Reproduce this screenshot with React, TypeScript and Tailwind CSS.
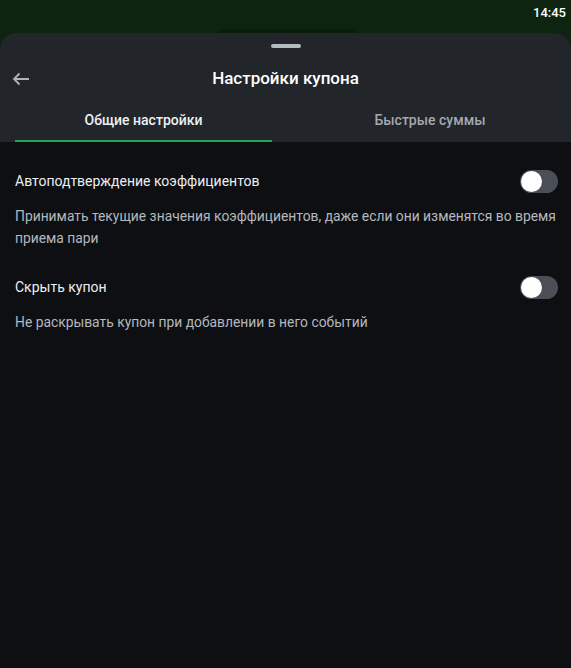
const Toggle = () => (
  <div className="w-[38px] h-[23px] rounded-full bg-[#4a4f57] flex items-center px-[1px] shrink-0">
    <div className="w-[21px] h-[21px] rounded-full bg-white" />
  </div>
);

const Setting = ({ title, text }: { title: string; text: string }) => (
  <div>
    <div className="flex items-center justify-between h-[24px] pr-[5px]">
      <span className="text-[14px] text-[#eceef1]">{title}</span>
      <Toggle />
    </div>
    <p className="mt-[12px] text-[13.85px] leading-[22px] text-[#b4b8be]">{text}</p>
  </div>
);

export default function App() {
  return (
    <div
      className="w-[571px] h-[668px] bg-[#0c2410] flex flex-col overflow-hidden"
      style={{ fontFamily: "Roboto, 'Noto Sans', sans-serif" }}
    >
      {/* status bar */}
      <div className="h-[33px] relative flex justify-end pr-[5px] pt-[3px]">
        <span className="text-[13px] font-medium text-white">14:45</span>
        <div className="absolute left-[218px] top-[29px] w-[138px] h-[8px] rounded-t-[6px] bg-[#0a1d0c]" />
      </div>

      <div className="flex-1 flex flex-col rounded-t-[16px] overflow-hidden bg-[#0e0f12] relative">
        {/* header */}
        <div className="bg-[#22252a]">
          <div className="flex justify-center pt-[11px]">
            <div className="w-[30px] h-[4px] rounded-full bg-[#b6bac1]" />
          </div>
          <div className="relative flex items-center justify-center h-[56px] mt-[3px]">
            <svg
              className="absolute left-[12px]"
              width="18"
              height="14"
              viewBox="0 0 18 14"
              fill="none"
              stroke="#aeb2b9"
              strokeWidth="1.8"
            >
              <path d="M17 7H2M7.5 1.5L2 7l5.5 5.5" />
            </svg>
            <span className="text-[17px] font-medium text-white">Настройки купона</span>
          </div>
          <div className="flex h-[35px]">
            <div className="ml-[15px] w-[257px] flex flex-col">
              <div className="flex-1 flex items-center justify-center pb-[6px] text-[14px] font-medium text-[#eef0f2]">
                Общие настройки
              </div>
              <div className="h-[2px] bg-[#22a35a]" />
            </div>
            <div className="flex-1 flex items-center justify-center pl-[17px] pb-[8px] text-[14px] font-medium text-[#a4a8af]">
              Быстрые суммы
            </div>
          </div>
        </div>

        {/* content */}
        <div className="pr-[8px] pl-[15px] pt-[27px] flex flex-col gap-[26px]">
          <Setting
            title="Автоподтверждение коэффициентов"
            text="Принимать текущие значения коэффициентов, даже если они изменятся во время приема пари"
          />
          <Setting title="Скрыть купон" text="Не раскрывать купон при добавлении в него событий" />
        </div>
      </div>
    </div>
  );
}
